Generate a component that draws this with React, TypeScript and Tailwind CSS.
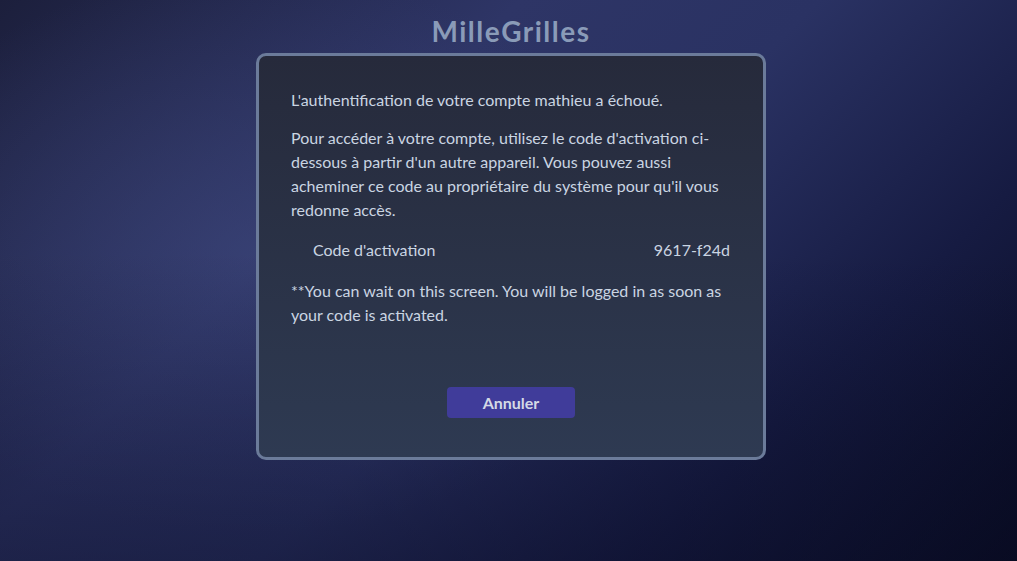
import React from "react";

export default function App() {
  return (
    <div
      className="min-h-screen w-full flex flex-col items-center bg-[linear-gradient(to_bottom,transparent_45%,rgba(10,12,38,0.45)_100%),radial-gradient(ellipse_40%_50%_at_25%_45%,rgba(62,72,125,0.55),transparent),linear-gradient(135deg,#1c1f3c_0%,#2e3566_33%,#2a3263_52%,#161b42_76%,#070a1f_100%)] text-slate-300"
      style={{ fontFamily: "Lato, 'Noto Sans', sans-serif" }}
    >
      <h1 className="pt-[14px] h-[53px] ml-[5px] text-[28px] leading-[34px] font-bold text-[#8a9bb8] tracking-[1.5px]">
        MilleGrilles
      </h1>
      <div className="ml-[5px] w-[510px] h-[407px] border-[3px] border-[#6b7b9a] rounded-[10px] bg-[linear-gradient(to_bottom,#262a3b,#2e3a52)] p-8 flex flex-col text-[16px] leading-[24px]">
        <p>L'authentification de votre compte mathieu a échoué.</p>
        <p className="mt-[14px]">
          Pour accéder à votre compte, utilisez le code d'activation ci-dessous à partir d'un autre appareil. Vous pouvez
          aussi acheminer ce code au propriétaire du système pour qu'il vous redonne accès.
        </p>
        <div className="mt-[16px] flex justify-between pl-[22px] pr-[1px]">
          <span>Code d'activation</span>
          <span>9617-f24d</span>
        </div>
        <p className="mt-[17px]">
          **You can wait on this screen. You will be logged in as soon as your code is activated.
        </p>
        <div className="mt-[60px] flex justify-center">
          <button className="w-[128px] h-[31px] rounded-[4px] bg-[#403c9a] text-[#d4d9e6] font-bold text-[16px]">
            Annuler
          </button>
        </div>
      </div>
    </div>
  );
}
